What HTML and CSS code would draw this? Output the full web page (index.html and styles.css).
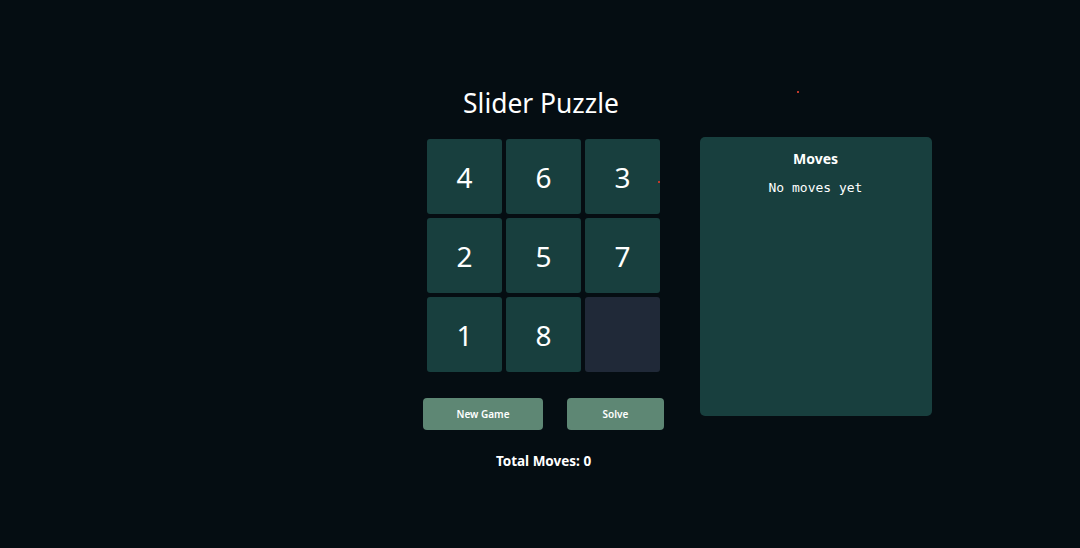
FILE: index.html
```html
<!DOCTYPE html>
<html>
<head>
	<meta charset="utf-8">
	<title>Slider Puzzle</title>
	<link rel="stylesheet" href="styles.css">
</head>
<body>
	<div class="app">
		<div class="game">
			<h1 class="title">Slider Puzzle</h1>
			<div class="board">
				<div class="tile">4</div>
				<div class="tile">6</div>
				<div class="tile">3</div>
				<div class="tile">2</div>
				<div class="tile">5</div>
				<div class="tile">7</div>
				<div class="tile">1</div>
				<div class="tile">8</div>
				<div class="tile tile-empty"></div>
			</div>
			<div class="controls">
				<button class="btn btn-new">New Game</button>
				<button class="btn btn-solve">Solve</button>
			</div>
			<div class="total">Total Moves: 0</div>
		</div>
		<div class="side">
			<div class="moves">
				<h2>Moves</h2>
				<div class="moves-list">No moves yet</div>
			</div>
		</div>
	</div>
	<span class="spark spark-a"></span>
	<span class="spark spark-b"></span>
</body>
</html>
```

FILE: styles.css
```css
html, body { margin: 0; padding: 0; height: 100%; }
body { background: #050d12; color: #fff; font-family: "Noto Sans", "Open Sans", sans-serif; position: relative; }

.app { display: grid; grid-template-columns: 1fr 242px 1fr; padding: 84px 0 0 7px; }
.game { grid-column: 2; display: flex; flex-direction: column; align-items: center; }
.side { grid-column: 3; }

.title { margin: 0 5px 0 0; font-size: 26.4px; font-weight: 400; line-height: 38px; }

.board { display: grid; grid-template-columns: repeat(3, 75px); grid-auto-rows: 75px; gap: 4px; margin-top: 17px; }
.tile { background: #183f3e; border-radius: 3px; display: flex; align-items: center; justify-content: center; font-size: 28px; }
.tile-empty { background: #202938; }

.controls { display: flex; gap: 24px; margin: 26px 0 0 0.5px; align-self: flex-start; }
.btn { height: 32px; border: 0; border-radius: 4px; background: #5e8774; color: #fff; font: 600 10px "Noto Sans", "Open Sans", sans-serif; }
.btn-new { width: 120px; }
.btn-solve { width: 97px; }

.total { margin-top: 22px; font-size: 13.5px; font-weight: 700; }

.moves { margin: 53px 0 0 35px; width: 232px; height: 279px; background: #183f3e; border-radius: 5px; text-align: center; }
.moves h2 { margin: 0; padding-top: 13px; font-size: 14px; font-weight: 700; line-height: 18px; }
.moves-list { margin-top: 12px; font: 13px "DejaVu Sans Mono", "Liberation Mono", monospace; }

.spark { position: absolute; width: 2px; height: 2px; background: #c0392b; }
.spark-a { left: 797px; top: 91px; }
.spark-b { left: 658px; top: 181px; }
```
